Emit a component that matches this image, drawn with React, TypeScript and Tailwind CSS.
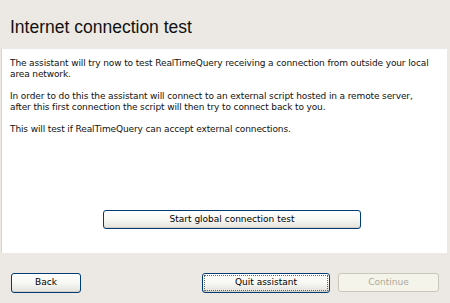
import React from 'react';

const xpButton =
  'flex items-center justify-center rounded-[3px] border border-[#003c74] bg-gradient-to-b from-white via-[#f7f7f4] to-[#e3e2dc] text-[9px] text-black shadow-[inset_0_-1px_0_#d6d0c5]';

const App: React.FC = () => {
  return (
    <div
      className="flex h-[303px] w-[450px] flex-col bg-[#ece9e4] text-black"
      style={{ fontFamily: '"DejaVu Sans", Tahoma, sans-serif' }}
    >
      <div className="flex h-[49px] shrink-0 items-center px-[10px] pt-[6px]">
        <h1
          className="whitespace-nowrap text-[17.5px] leading-none text-[#111]"
          style={{ fontFamily: '"Liberation Sans", Tahoma, sans-serif' }}
        >
          Internet connection test
        </h1>
      </div>

      <div className="ml-[1px] mr-[3px] flex h-[204px] shrink-0 flex-col border-l border-[#d8d5cf] bg-white pl-[8px] pr-[6px] pt-[9px]">
        <div className="whitespace-nowrap text-[9px] leading-[11px] tracking-[-0.12px] text-[#111]">
          <p>
            The assistant will try now to test RealTimeQuery receiving a connection from outside your local
            <br />
            area network.
          </p>
          <p className="mt-[11px]">
            In order to do this the assistant will connect to an external script hosted in a remote server,
            <br />
            after this first connection the script will then try to connect back to you.
          </p>
          <p className="mt-[11px]">This will test if RealTimeQuery can accept external connections.</p>
        </div>

        <div className="mt-auto mb-[24px] flex pl-[93px]">
          <button className={`${xpButton} h-[19px] w-[258px]`}>Start global connection test</button>
        </div>
      </div>

      <div className="flex flex-1 items-start pt-[20px]">
        <button className={`${xpButton} ml-[11px] h-[20px] w-[70px]`}>Back</button>
        <button className={`${xpButton} ml-[121px] h-[20px] w-[128px] p-[1px]`}>
          <span className="flex h-full w-full items-center justify-center border border-dotted border-[#666]">
            Quit assistant
          </span>
        </button>
        <button className="ml-[8px] flex h-[19px] w-[101px] items-center justify-center rounded-[3px] border border-[#c9c7ba] bg-[#f5f4ea] text-[9px] text-[#aca899]">
          Continue
        </button>
      </div>
    </div>
  );
};

export default App;
